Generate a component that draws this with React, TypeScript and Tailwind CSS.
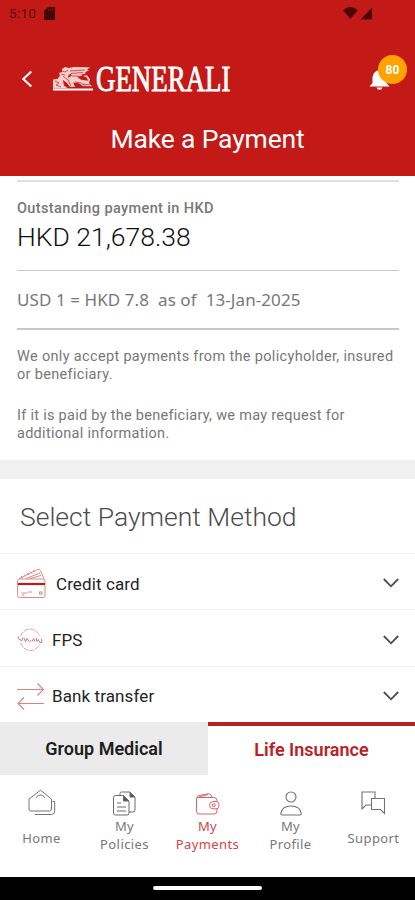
import React from 'react';

const roboto = "font-['Roboto',sans-serif]";
const noto = "font-['Noto_Sans',sans-serif]";

function Header() {
  return (
    <header className="h-[176px] bg-[#c31a17] text-white">
      <div className="flex h-[26px] items-center justify-between pl-[9px] pr-[42px] text-[#5b0d0c]">
        <div className="flex items-center gap-[8px]">
          <span className="text-[13.5px] tracking-[0.3px] leading-[26px]">5:10</span>
          <svg width="11" height="13" viewBox="0 0 11 13" fill="#430909">
            <path d="M4 0h6q1 0 1 1v11q0 1-1 1H1q-1 0-1-1V4Z" />
            <path d="M4.5 2v2M6.5 2v2M8.5 2v2" stroke="#a01614" strokeWidth=".7" />
          </svg>
        </div>
        <svg width="30" height="13" viewBox="0 0 30 13" fill="#4a0908">
          <path d="M0 3.2Q7.3-3 14.8 3.2L7.4 12Z" />
          <path d="M29 .5V12.5H17.5Z" />
        </svg>
      </div>
      <div className="flex h-[86px] items-start pl-[21px] pr-[8px] pt-[26px]">
        <svg className="mt-[18px]" width="12" height="18" viewBox="0 0 12 18" fill="none" stroke="white" strokeWidth="2.1">
          <path d="M10.3 1.5 2.3 9l8 7.6" />
        </svg>
        <svg className="ml-[19px] mt-[6px] overflow-visible" width="184" height="42" viewBox="0 -6 184 42">
          <g fill="#f6cfcc">
            <path d="M1 24.5h40v2H1Z" fill="white" />
            <path d="M1 15.5l7-1 3 2 1 5 4 3H1Z" />
            <path d="M6 14l2-2-1-3 3-1V5l3-2 4 1 3-1-2 3 1 3-3 3 1 4 4 2 2 5h-5l-3-4-4-3-3 2Z" />
            <path d="M16 7l5-4 17 .3-3 2.5 2 .5-4 2 1 1-5 1.5 1 1-5 1 4 3 7 1-1-3-4-2 4-.5 3 4-1 4 3 3h-9l-4-3-8-1-3-4 4-3Z" />
          </g>
          <g fill="none" stroke="#c31a17" strokeWidth=".7">
            <path d="M3 17l4 2-3 2 5 2M10 7l3 1 3-2M11 12l5 4 3 6M18 7l15-1M19 9.5l12-1M20 12l7 0M23 18l6 1 5 4M31 20l7 1M12 19l4 3M9 10l4 1" />
          </g>
          <text x="44" y="26.5" textLength="134.5" lengthAdjust="spacingAndGlyphs" fill="white" stroke="white" strokeWidth=".9" fontSize="36" className="font-['Liberation_Serif',serif]">GENERALI</text>
        </svg>
        <div className="relative ml-auto h-[36px] w-[37px]">
          <svg className="absolute left-[-1px] top-[17px]" width="21" height="21" viewBox="0 0 20 21" fill="white">
            <path d="M0 17.5 3 14V8Q4 2 10 1q6 1 7 7v6l3 3.5Z" />
            <path d="M7 18.5h6q-.5 2.2-3 2.2T7 18.5" />
          </svg>
          <span className="absolute left-[8px] top-[3px] flex h-[29px] w-[29px] items-center justify-center rounded-full bg-[#ffa300] text-[12px] font-bold">80</span>
        </div>
      </div>
      <h1 className="text-center text-[26.5px] leading-[54px] tracking-[-0.15px]">Make a Payment</h1>
    </header>
  );
}

function CardIcon() {
  return (
    <svg width="29" height="31" viewBox="0 0 29 31" fill="none" stroke="#d88b8d">
      <rect x=".6" y="11" width="27.4" height="18.5" rx="2" />
      <path d="M2 10.8 20.5 1.5q2-.8 2.8 1L27 10.8M4 8l2 2M7 6.5l2 2M10 5l2 2M13 3.5l2 2M16 2.5l2 1.5M9 10.5 23 5M13 10.5l11-3" />
      <path d="M1 16h27" stroke="#c31a17" strokeWidth="2.2" />
      <path d="M4.5 25h6M4.5 27h3M11 24h4" />
      <rect x="22.5" y="24" width="2.5" height="2" />
    </svg>
  );
}

function FpsIcon() {
  return (
    <svg width="26" height="24" viewBox="0 0 26 24" fill="none" stroke="#e3a0a2">
      <path d="M3.5 8Q7 1.2 13 1q6 .2 10 7M3.5 15Q7 22.5 13 22.5q6.5 0 10-6.5" strokeDasharray="5 1" />
      <path d="M1 8.5l1 3 3 1 1-3M7 10l1.500 3.500 1.500-3 2 3M12.500 14l1.500-2M15 13.500l1.500-3 1.500 3M19 10l1 3.500 1.500-2 1 3 2.500 0M24.500 11l.5 3" stroke="#d57578" />
    </svg>
  );
}

function TransferIcon() {
  return (
    <svg width="28" height="28" viewBox="0 0 28 28" fill="none" stroke="#da7f83" strokeWidth="1.1">
      <path d="M0 7.5h26.5M20.5 1.5l6 6-6 6M27 21.5H1M7 15.5l-6 6 6 6" />
    </svg>
  );
}

function Method({ icon, name, space }: { icon: React.ReactNode; name: string; space: string }) {
  return (
    <div className="flex h-[56.4px] items-center border-t-[1.5px] border-[#f0f0f0] pl-[17px] pr-[16px] pt-[4px]">
      <div className={space}>{icon}</div>
      <span className="text-[17px] leading-[20px] tracking-[0.1px] text-[#242424]">{name}</span>
      <svg className="mb-[1px] ml-auto" width="16" height="10" viewBox="0 0 16 10" fill="none" stroke="#4d4d4d" strokeWidth="1.8">
        <path d="M.8 1 8 8.3 15.2 1" />
      </svg>
    </div>
  );
}

function NavItem({ icon, lines, active }: { icon: React.ReactNode; lines: string[]; active?: boolean }) {
  return (
    <div className={`flex w-[83px] flex-col items-center ${active ? 'text-[#cf4646]' : 'text-[#777777]'}`}>
      <div className="flex h-[29px] items-end">{icon}</div>
      <div className={`${noto} flex flex-col text-center text-[13px] leading-[18.5px] tracking-[0.4px] ${lines.length > 1 ? 'pt-[0.5px]' : 'pt-[13px]'}`}>
        {lines.map((line) => (
          <span key={line}>{line}</span>
        ))}
      </div>
    </div>
  );
}

export default function App() {
  return (
    <div className={`${roboto} flex h-[900px] w-[415px] flex-col overflow-hidden bg-white`}>
      <Header />
      <main className="h-[546px]">
        <section className="h-[284px] px-[17px] pt-[4px]">
          <div className="mr-[-1px] h-[2px] bg-[#dfe0df]" />
          <p className="mt-[17px] text-[14.5px] font-medium leading-[20px] tracking-[0.38px] text-[#777777]">Outstanding payment in HKD</p>
          <p className="mt-[1px] text-[26.5px] font-light leading-[34px] text-[#101010]">HKD 21,678.38</p>
          <div className="mr-[-1px] mt-[15.5px] h-[1.5px] bg-[#c8c8c8]" />
          <p className={`${noto} mt-[17px] whitespace-pre text-[17px] leading-[24px] tracking-[0.08px] text-[#777777]`}>USD 1 = HKD 7.8  as of  13-Jan-2025</p>
          <div className="mr-[-1px] mt-[16px] h-[1.5px] bg-[#c8c8c8]" />
          <p className="mt-[18.5px] whitespace-nowrap text-[14.5px] leading-[18px] tracking-[0.33px] text-[#777777]">We only accept payments from the policyholder, insured<br />or beneficiary.</p>
          <p className="mt-[22.5px] whitespace-nowrap text-[14.5px] leading-[18px] tracking-[0.28px] text-[#777777]">If it is paid by the beneficiary, we may request for<br />additional information.</p>
        </section>
        <div className="h-[18.5px] bg-[#f0f0f0]" />
        <h2 className="h-[74.5px] pl-[20px] text-[26.5px] font-light leading-[75px] text-[#4c4c4c]">Select Payment Method</h2>
        <Method icon={<CardIcon />} name="Credit card" space="w-[39px]" />
        <Method icon={<FpsIcon />} name="FPS" space="w-[35px]" />
        <Method icon={<TransferIcon />} name="Bank transfer" space="w-[35px]" />
      </main>
      <div className="flex h-[53px] text-[18px] font-semibold leading-[54px]">
        <div className="w-[208px] bg-[#ebebeb] text-center text-[#1e1e1e]">Group Medical</div>
        <div className="w-[207px] border-t-[4px] border-[#b82222] text-center leading-[47px] text-[#bb2024]">Life Insurance</div>
      </div>
      <nav className="flex h-[101.5px] pt-[12px]">
        <NavItem
          lines={['Home']}
          icon={
            <svg width="28" height="27" viewBox="0 0 28 27" fill="none" stroke="#757575">
              <path d="M1 10 12.5 1.2 23.500 10v10q0 2-2 2H3q-2 0-2-2ZM8 8.500q4.500-5 9 0M24.500 12.500h2.2V22q0 3.500-3.500 3.500H7" />
            </svg>
          }
        />
        <NavItem
          lines={['My', 'Policies']}
          icon={
            <svg width="23" height="25" viewBox="0 0 23 25" fill="none" stroke="#6b6b6b">
              <path d="M2.5 4.5h8L16 10v12q0 2-2 2H2.5q-2 0-2-2V6.5q0-2 2-2ZM7 4V2.5Q7 1 8.5 1H17l5 5v13q0 2-2 2h-4M4 12h4M4 16h9M4 20h9" />
              <path d="M10.5 4.5 16 10h-5.5ZM17 1l5 5h-5Z" fill="#595959" />
            </svg>
          }
        />
        <NavItem
          active
          lines={['My', 'Payments']}
          icon={
            <svg width="24" height="23" viewBox="0 0 24 23" fill="none" stroke="#d76568">
              <path d="M1 4.5h17q3 0 3 3V9M21 15.5V18q0 3-3 3H3q-2.5 0-2.5-3V6q0-3 2.5-3.500L12 .8q2-.2 3 1.200l1 2.300M3 4l9-2.500M21 8.500h-4q-3.500.3-3.500 3.700t3.500 3.600h4q2-.3 2-3.600t-2-3.700Z" />
              <circle cx="17.8" cy="12.2" r="1.5" />
            </svg>
          }
        />
        <NavItem
          lines={['My', 'Profile']}
          icon={
            <svg width="22" height="25" viewBox="0 0 22 25" fill="none" stroke="#727272" strokeWidth="1.1">
              <circle cx="11" cy="6" r="5" />
              <path d="M.7 22.5Q2 15 11 15t10.3 7.5q0 1.500-1.500 1.500H2.200Q.7 24 .7 22.500Z" />
            </svg>
          }
        />
        <NavItem
          lines={['Support']}
          icon={
            <svg className="mb-[1px]" width="25" height="24" viewBox="0 0 25 24" fill="none" stroke="#727272" strokeWidth="1.1">
              <path d="M10 14H5l-4 4V1h13v6M10.5 7.5h13v15l-4-4h-9Z" />
            </svg>
          }
        />
      </nav>
      <footer className="flex h-[23.5px] justify-center bg-black pt-[9.5px]">
        <div className="h-[4px] w-[109px] rounded-full bg-white" />
      </footer>
    </div>
  );
}
